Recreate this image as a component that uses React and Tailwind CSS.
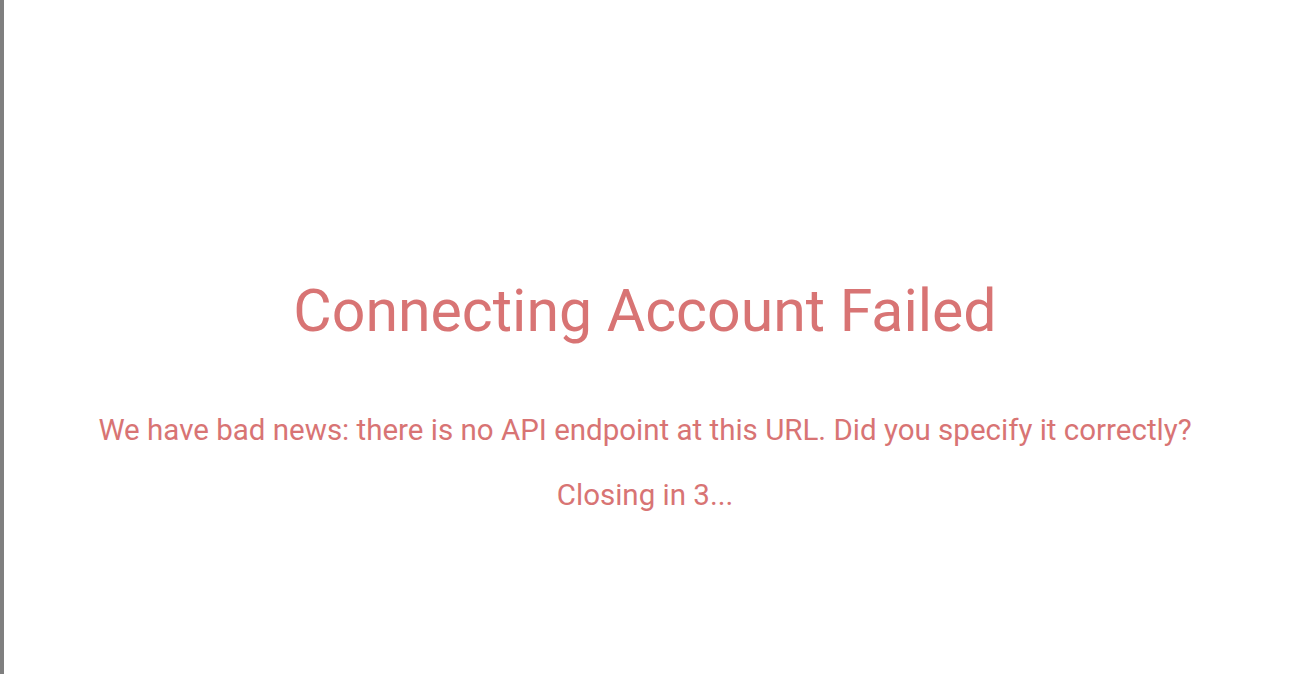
import React from "react";

const App = () => {
  return (
    <div className="flex h-[674px] w-[1308px] bg-white font-['Roboto',sans-serif] text-[#d87474]">
      <div className="w-[4px] shrink-0 bg-[#7f7f7f]" />
      <div className="flex w-[1282px] flex-col items-center pt-[273px]">
        <h1 className="text-[59px] leading-[76px] font-normal">Connecting Account Failed</h1>
        <p className="mt-[63px] text-[29.5px] leading-[36px]">
          We have bad news: there is no API endpoint at this URL. Did you specify it correctly?
        </p>
        <p className="mt-[29px] text-[29.5px] leading-[36px]">Closing in 3...</p>
      </div>
    </div>
  );
};

export default App;
